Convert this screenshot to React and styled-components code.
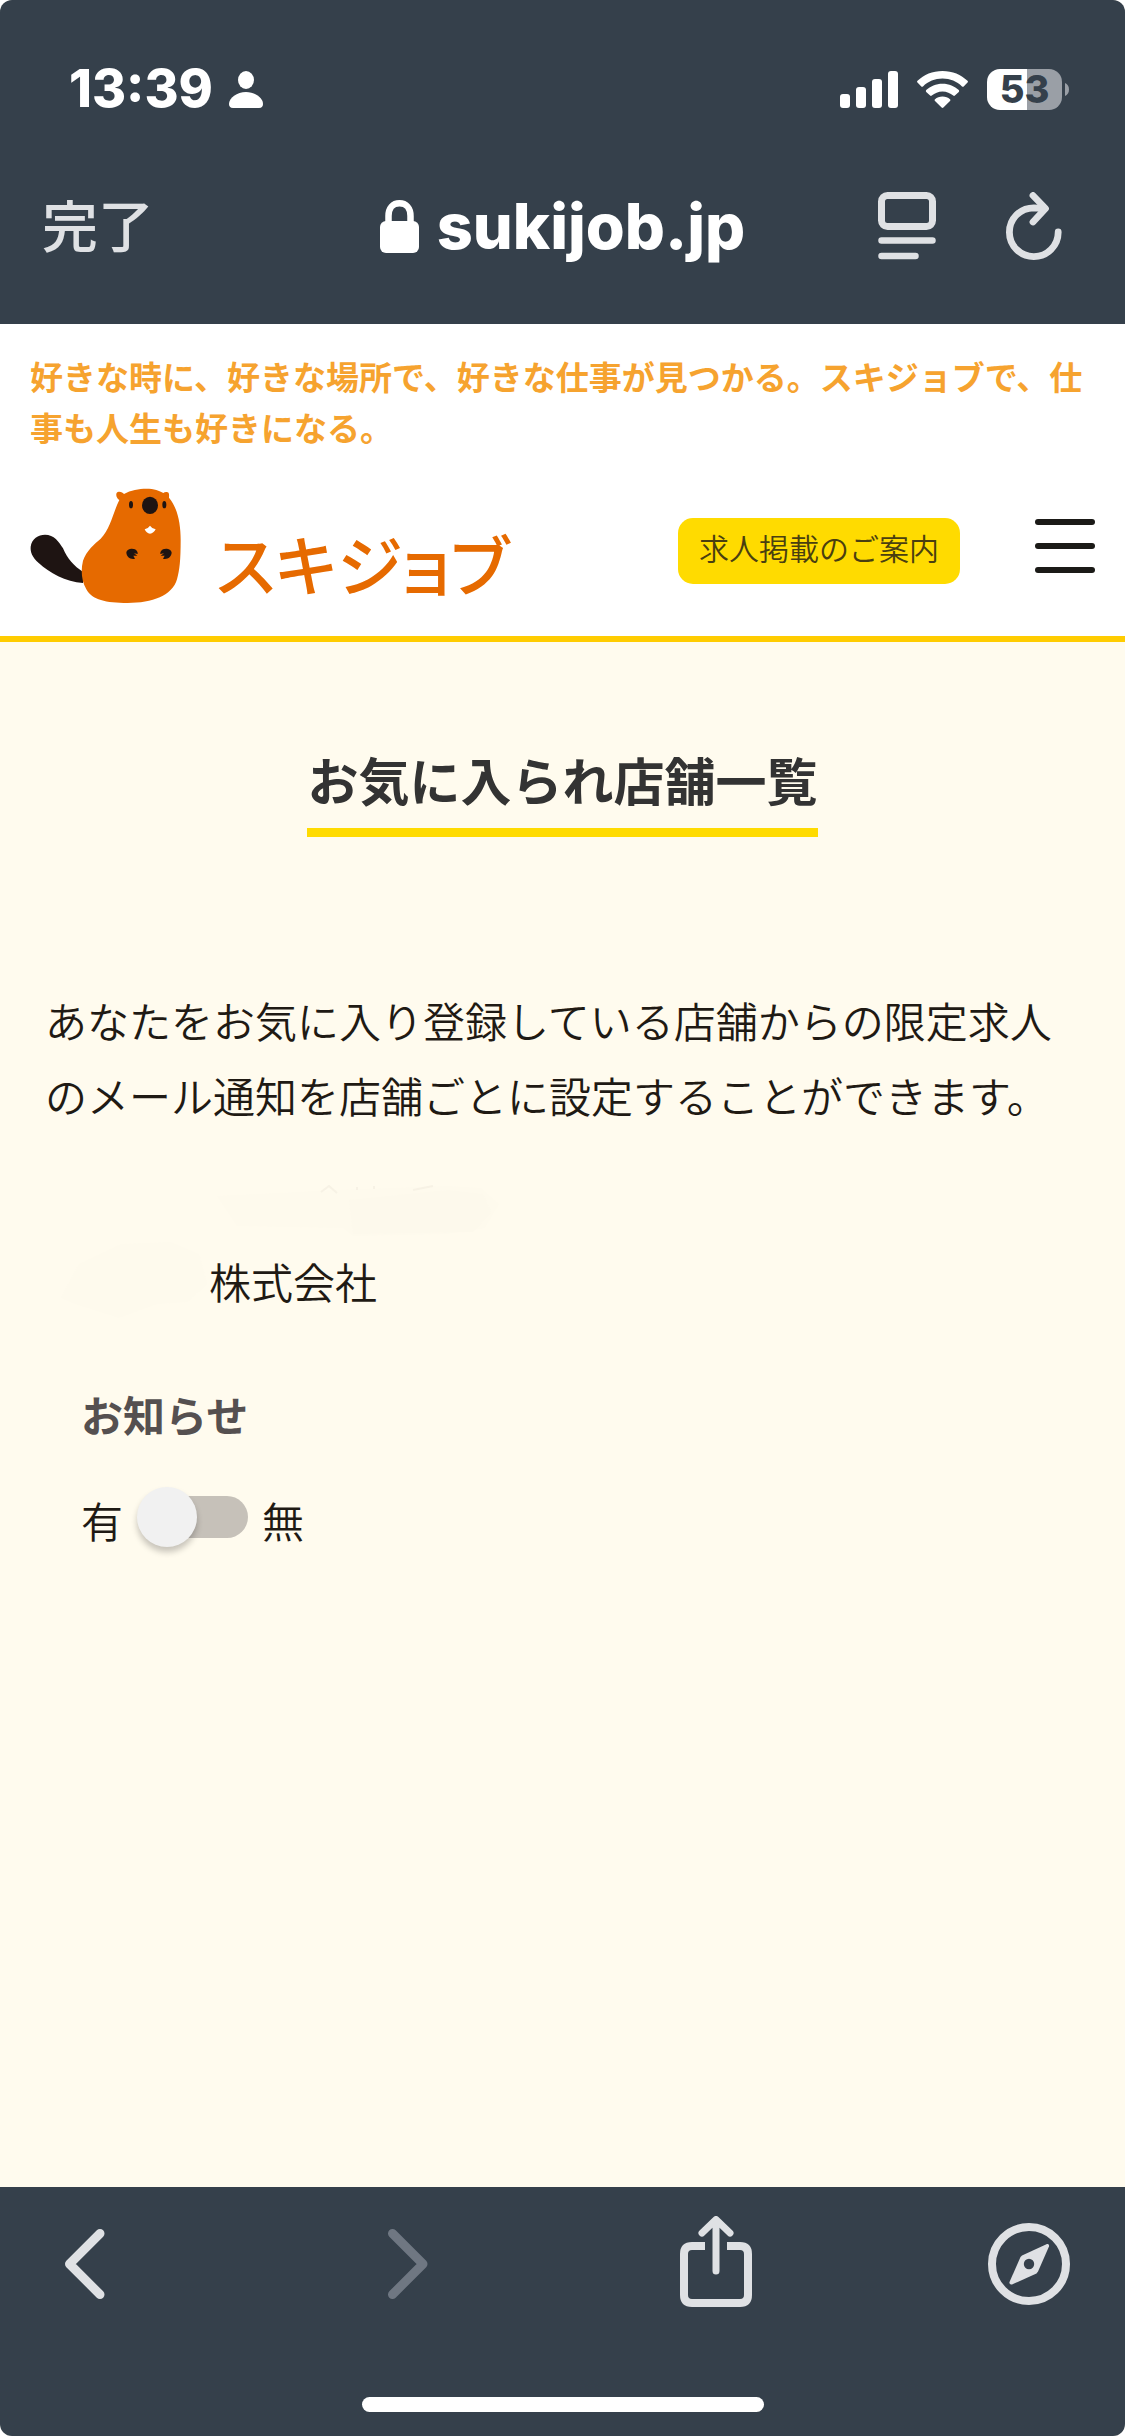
import { useState } from "react";
import styled, { createGlobalStyle } from "styled-components";

const GlobalStyle = createGlobalStyle`
  * {
    box-sizing: border-box;
  }
  body {
    margin: 0;
    background: #ffffff;
    font-family: "Noto Sans CJK JP", sans-serif;
    color: #1f1a14;
  }
  h1, h2, p {
    margin: 0;
  }
  button {
    padding: 0;
    border: 0;
    background: none;
    font: inherit;
    color: inherit;
    cursor: pointer;
  }
  svg {
    display: block;
  }
`;

const Screen = styled.div`
  display: flex;
  flex-direction: column;
  min-height: 100vh;
  border-radius: 12px;
  overflow: hidden;
  background: #fffbee;
`;

const BrowserTop = styled.header`
  background: #35404b;
`;

const StatusBar = styled.div`
  display: flex;
  align-items: center;
  justify-content: space-between;
  height: 128px;
  padding: 50px 56px 0 69px;
  color: #ffffff;
  font-family: Inter, sans-serif;
`;

const StatusGroup = styled.div`
  display: flex;
  align-items: center;
  gap: ${(props) => props.$gap}px;
`;

const Clock = styled.span`
  font-size: 52px;
  font-weight: 800;
  line-height: 60px;
`;

const Battery = styled.div`
  display: flex;
  align-items: center;
  gap: 3px;
`;

const BatteryBody = styled.div`
  width: 75px;
  height: 41px;
  border-radius: 13px;
  background: linear-gradient(
    to right,
    #ffffff ${(props) => props.$level}%,
    #9a9fa6 ${(props) => props.$level}%
  );
  color: #35404b;
  font-size: 38px;
  font-weight: 800;
  line-height: 41px;
  text-align: center;
`;

const AddressBar = styled.div`
  display: grid;
  grid-template-columns: 1fr auto 1fr;
  align-items: center;
  height: 196px;
  padding: 0 42px;
  color: #dfe1e4;
`;

const DoneButton = styled.button`
  justify-self: start;
  padding-bottom: 6px;
  font-size: 56px;
  font-weight: 500;
  line-height: 76px;
`;

const Domain = styled.div`
  display: flex;
  align-items: center;
  gap: 18px;
  color: #ffffff;
  font-family: Inter, sans-serif;
  font-size: 63px;
  font-weight: 800;
  line-height: 76px;
`;

const AddressActions = styled.div`
  display: flex;
  justify-self: end;
  gap: 70px;
  padding-right: 21px;
`;

const SiteHeader = styled.div`
  padding: 27px 30px 32px;
  border-bottom: 6px solid #ffcc00;
  background: #ffffff;
`;

const Tagline = styled.p`
  color: #f6a32f;
  font-size: 33px;
  font-weight: 700;
  line-height: 51px;
`;

const BrandRow = styled.div`
  display: flex;
  align-items: flex-start;
  justify-content: space-between;
  padding-top: 35px;
`;

const Brand = styled.a`
  display: flex;
  align-items: flex-end;
  gap: 34px;
  color: #e66a00;
  text-decoration: none;
`;

const BrandName = styled.span`
  font-size: 66px;
  font-weight: 500;
  line-height: 84px;
  font-feature-settings: "palt";
`;

const BrandActions = styled.div`
  display: flex;
  align-items: flex-start;
  gap: 75px;
  margin-top: 30px;
`;

const GuideLink = styled.a`
  padding: 0 21px 8px;
  border-radius: 15px;
  background: #ffdb00;
  color: #4a3f10;
  font-size: 30px;
  font-weight: 350;
  line-height: 58px;
  text-decoration: none;
`;

const Main = styled.main`
  flex: 1;
  padding: 99px 45px 0;
`;

const Title = styled.h1`
  width: fit-content;
  margin: 0 auto 145px;
  padding-bottom: 11px;
  border-bottom: 9px solid #ffdb00;
  color: #333333;
  font-size: 51px;
  font-weight: 700;
  line-height: 76px;
`;

const BodyText = styled.p`
  font-size: 42px;
  font-weight: 350;
  line-height: 75px;
`;

const Store = styled.section`
  margin-top: 34px;
`;

const StoreLine = styled.div`
  display: flex;
  align-items: flex-end;
  height: 76px;
  padding-left: ${(props) => props.$indent}px;
`;

const NoticeSetting = styled.div`
  display: flex;
  flex-direction: column;
  gap: 35px;
  margin-top: 58px;
  padding-left: 36px;
`;

const NoticeTitle = styled.h2`
  color: #555050;
  font-size: 42px;
  font-weight: 700;
  line-height: 76px;
`;

const SwitchRow = styled.label`
  display: flex;
  align-items: flex-end;
  gap: 14px;
  width: fit-content;
  font-size: 42px;
  font-weight: 350;
  line-height: 54px;
`;

const Switch = styled.input`
  appearance: none;
  display: grid;
  align-items: center;
  width: 111px;
  height: 60px;
  margin: 0;
  cursor: pointer;

  &::before,
  &::after {
    content: "";
    grid-area: 1 / 1;
  }
  &::before {
    height: 42px;
    margin-left: 6px;
    border-radius: 21px;
    background: #c6c1b9;
  }
  &::after {
    justify-self: start;
    width: 60px;
    height: 60px;
    border-radius: 50%;
    background: #f1f1f1;
    box-shadow: 0 5px 6px rgba(0, 0, 0, 0.22);
  }
  &:checked::after {
    justify-self: end;
  }
`;

const BrowserBottom = styled.footer`
  padding: 29px 0 24px;
  background: #35404b;
`;

const Toolbar = styled.nav`
  display: grid;
  grid-template-columns: 323fr 308fr 313fr 96px;
  padding: 0 48px 0 37px;
  color: #dfe1e4;
`;

const ToolButton = styled.button`
  width: 96px;
  height: 96px;

  &:disabled {
    color: #6f7782;
  }
`;

const HomeIndicator = styled.div`
  width: 402px;
  height: 15px;
  margin: 85px auto 0;
  border-radius: 8px;
  background: #ffffff;
`;

function PersonIcon() {
  return (
    <svg width="34" height="37" viewBox="0 0 34 37" fill="currentColor">
      <ellipse cx="17" cy="9" rx="8" ry="9" />
      <path d="M17 21c9 0 17 6 17 12 0 2-1 4-4 4H4c-3 0-4-2-4-4 0-6 8-12 17-12Z" />
    </svg>
  );
}

function SignalIcon() {
  return (
    <svg width="58" height="37" viewBox="0 0 58 37" fill="currentColor">
      <rect x="0" y="23" width="10" height="14" rx="3" />
      <rect x="16" y="16" width="10" height="21" rx="3" />
      <rect x="32" y="8" width="10" height="29" rx="3" />
      <rect x="48" y="0" width="10" height="37" rx="3" />
    </svg>
  );
}

function WifiIcon() {
  return (
    <svg width="51" height="37" viewBox="0 0 51 37" fill="currentColor">
      <path d="M25.500 0C35.500 0 44.200 3.700 50.500 9.800Q51.400 10.700 50.500 11.600L46.700 15.500Q45.900 16.200 45 15.400C39.800 10.600 33.200 7.600 25.500 7.600S11.200 10.600 6 15.400Q5.100 16.200 4.300 15.500L.5 11.600Q-.4 10.700.5 9.800C6.800 3.700 15.500 0 25.500 0Z" />
      <path d="M25.500 12.800C32 12.800 37.600 15.300 41.800 19.100Q42.600 20 41.800 20.900L37.900 24.600Q37.100 25.300 36.200 24.600C33.300 22.200 29.700 20.500 25.500 20.500S17.700 22.200 14.800 24.600Q13.900 25.300 13.100 24.600L9.200 20.900Q8.400 20 9.200 19.100C13.400 15.300 19 12.800 25.500 12.800Z" />
      <path d="M25.500 25.500C28.500 25.500 31 26.600 33 28.200Q33.900 29 33 29.900L26.400 36.500Q25.500 37.300 24.600 36.500L18 29.900Q17.100 29 18 28.200C20 26.600 22.500 25.500 25.500 25.500Z" />
    </svg>
  );
}

function BatteryTip() {
  return (
    <svg width="4" height="13" viewBox="0 0 4 13">
      <path d="M0 0c2.500 1 4 3.500 4 6.500S2.500 12 0 13Z" fill="#9a9fa6" />
    </svg>
  );
}

function LockIcon() {
  return (
    <svg width="39" height="53" viewBox="0 0 39 53">
      <path
        d="M8.500 25V16C8.500 8 13 3.300 19.500 3.300S30.500 8 30.500 16v9"
        fill="none"
        stroke="currentColor"
        strokeWidth="6.500"
      />
      <rect y="21" width="39" height="32" rx="6" fill="currentColor" />
    </svg>
  );
}

function ReaderIcon() {
  return (
    <svg
      width="58"
      height="68"
      viewBox="0 0 58 68"
      fill="none"
      stroke="currentColor"
      strokeWidth="7"
      strokeLinecap="round"
    >
      <rect x="3.500" y="3.500" width="51" height="31" rx="6" />
      <path d="M3.500 48.500h51M3.500 64h34" strokeWidth="6.500" />
    </svg>
  );
}

function ReloadIcon() {
  return (
    <svg
      width="56"
      height="68"
      viewBox="0 0 56 68"
      fill="none"
      stroke="currentColor"
      strokeWidth="6.800"
      strokeLinecap="round"
      strokeLinejoin="round"
    >
      <path d="M52.200 40A24.400 24.400 0 1 1 27.800 15.800L38 16.500" />
      <path d="M27 3.500L39.500 16.500L27 30" />
    </svg>
  );
}

function BeaverLogo() {
  return (
    <svg width="152" height="116" viewBox="93 84 456 348">
      <path
        d="M252 369C200 366 150 338 120 310C98 290 94 275 95 260C98 236 118 224 138 224C165 224 180 245 192 265C205 297 225 318 252 336Z"
        fill="#1e1412"
      />
      <path
        d="M361 120C350 113 349 98 357 96C364 94 372 98 375 102C395 90 420 86 442 86C465 86 482 92 493 99C497 95 506 95 509 99C511 105 510 109 510 113C535 142 545 190 545 240C545 300 542 330 534 358C520 407 460 429 386 429C320 429 280 420 262 388C247 362 245 330 252 302C262 272 288 250 305 236C335 205 343 155 361 120Z"
        fill="#e66a00"
      />
      <g fill="#1e1412">
        <ellipse cx="396" cy="134" rx="6" ry="11" />
        <ellipse cx="496" cy="134" rx="6" ry="11" />
        <ellipse cx="453" cy="136" rx="24" ry="26" />
        <path d="M382 278C383 266 400 264 408 268C414 272 417 277 416 282L405 280L415 287L403 287L408 296C394 299 383 291 382 278Z" />
        <path d="M518 278C517 266 500 264 492 268C486 272 483 277 484 282L495 280L485 287L497 287L492 296C506 299 517 291 518 278Z" />
      </g>
      <path
        d="M437 208Q447 206 453 197Q459 206 470 208Q464 220 453 221Q442 220 437 208Z"
        fill="#ffffff"
      />
    </svg>
  );
}

function MenuIcon() {
  return (
    <svg width="60" height="56" viewBox="0 0 60 56" fill="#1b1a17">
      <rect y="1" width="60" height="6" rx="3" />
      <rect y="25" width="60" height="6" rx="3" />
      <rect y="49" width="60" height="6" rx="3" />
    </svg>
  );
}

function NameSmudge() {
  return (
    <svg width="400" height="60" viewBox="0 0 400 60" aria-hidden="true">
      <path
        d="M110 14L230 8L340 4L374 6L392 22L378 46L340 52L246 54L236 46L130 44Z"
        fill="#fefaed"
      />
      <path d="M242 18L340 8L376 12L384 30L366 50L246 52Z" fill="#fdf9ec" />
      <path
        d="M214 10l8-6 8 7M250 5v3M267 4v3M306 8l20-4"
        stroke="#f7f2e5"
        fill="none"
        strokeWidth="2"
      />
    </svg>
  );
}

function AvatarSmudge() {
  return (
    <svg width="148" height="76" viewBox="0 0 148 76" aria-hidden="true">
      <path
        d="M18 22L60 2L110 0L138 12L146 42L126 60L96 62L58 76L14 62L0 56Z"
        fill="#fefaed"
      />
    </svg>
  );
}

function Chevron({ d }) {
  return (
    <svg width="96" height="96" viewBox="0 0 96 96" fill="none">
      <path
        d={d}
        stroke="currentColor"
        strokeWidth="9"
        strokeLinecap="round"
        strokeLinejoin="round"
      />
    </svg>
  );
}

function ShareIcon() {
  return (
    <svg
      width="96"
      height="96"
      viewBox="0 0 96 96"
      fill="none"
      stroke="currentColor"
      strokeLinecap="round"
      strokeLinejoin="round"
    >
      <path
        d="M37 30H24q-8 0-8 8v41q0 8 8 8h48q8 0 8-8V38q0-8-8-8H59"
        strokeWidth="8"
        strokeLinecap="butt"
      />
      <path d="M48 55V4M34 17L48 3.500L62 17" strokeWidth="7" />
    </svg>
  );
}

function CompassIcon() {
  return (
    <svg width="96" height="96" viewBox="0 0 96 96">
      <circle cx="48" cy="48" r="37" fill="none" stroke="currentColor" strokeWidth="8" />
      <path
        d="M66 28q2.500-.5 2 2.500L57 55.500L55.500 57.500L31 68.500q-3 .5-2.500-2.500L39.500 41L41 39.500Z"
        fill="currentColor"
      />
      <circle cx="48" cy="48" r="5.200" fill="#35404b" />
    </svg>
  );
}

function NoticeSwitch() {
  const [isOff, setIsOff] = useState(false);

  return (
    <SwitchRow>
      <span>有</span>
      <Switch
        type="checkbox"
        role="switch"
        checked={isOff}
        onChange={(e) => setIsOff(e.target.checked)}
      />
      <span>無</span>
    </SwitchRow>
  );
}

function App() {
  return (
    <>
      <GlobalStyle />
      <Screen>
        <BrowserTop>
          <StatusBar>
            <StatusGroup $gap={16}>
              <Clock>13:39</Clock>
              <PersonIcon />
            </StatusGroup>
            <StatusGroup $gap={19}>
              <SignalIcon />
              <WifiIcon />
              <Battery>
                <BatteryBody $level={53}>53</BatteryBody>
                <BatteryTip />
              </Battery>
            </StatusGroup>
          </StatusBar>
          <AddressBar>
            <DoneButton type="button">完了</DoneButton>
            <Domain>
              <LockIcon />
              <span>sukijob.jp</span>
            </Domain>
            <AddressActions>
              <button type="button" aria-label="リーダー">
                <ReaderIcon />
              </button>
              <button type="button" aria-label="再読み込み">
                <ReloadIcon />
              </button>
            </AddressActions>
          </AddressBar>
        </BrowserTop>

        <SiteHeader>
          <Tagline>
            好きな時に、好きな場所で、好きな仕事が見つかる。スキジョブで、仕事も人生も好きになる。
          </Tagline>
          <BrandRow>
            <Brand href="#home">
              <BeaverLogo />
              <BrandName>スキジョブ</BrandName>
            </Brand>
            <BrandActions>
              <GuideLink href="#guide">求人掲載のご案内</GuideLink>
              <button type="button" aria-label="メニュー">
                <MenuIcon />
              </button>
            </BrandActions>
          </BrandRow>
        </SiteHeader>

        <Main>
          <Title>お気に入られ店舗一覧</Title>
          <BodyText>
            あなたをお気に入り登録している店舗からの限定求人のメール通知を店舗ごとに設定することができます。
          </BodyText>
          <Store>
            <StoreLine $indent={62}>
              <NameSmudge />
            </StoreLine>
            <StoreLine $indent={16}>
              <AvatarSmudge />
              <BodyText>株式会社</BodyText>
            </StoreLine>
            <NoticeSetting>
              <NoticeTitle>お知らせ</NoticeTitle>
              <NoticeSwitch />
            </NoticeSetting>
          </Store>
        </Main>

        <BrowserBottom>
          <Toolbar>
            <ToolButton type="button" aria-label="戻る">
              <Chevron d="M63 17.500L32.500 48L63 78.500" />
            </ToolButton>
            <ToolButton type="button" aria-label="進む" disabled>
              <Chevron d="M32.500 17.500L63 48L32.500 78.500" />
            </ToolButton>
            <ToolButton type="button" aria-label="共有">
              <ShareIcon />
            </ToolButton>
            <ToolButton type="button" aria-label="Safariで開く">
              <CompassIcon />
            </ToolButton>
          </Toolbar>
          <HomeIndicator />
        </BrowserBottom>
      </Screen>
    </>
  );
}

export default App;
